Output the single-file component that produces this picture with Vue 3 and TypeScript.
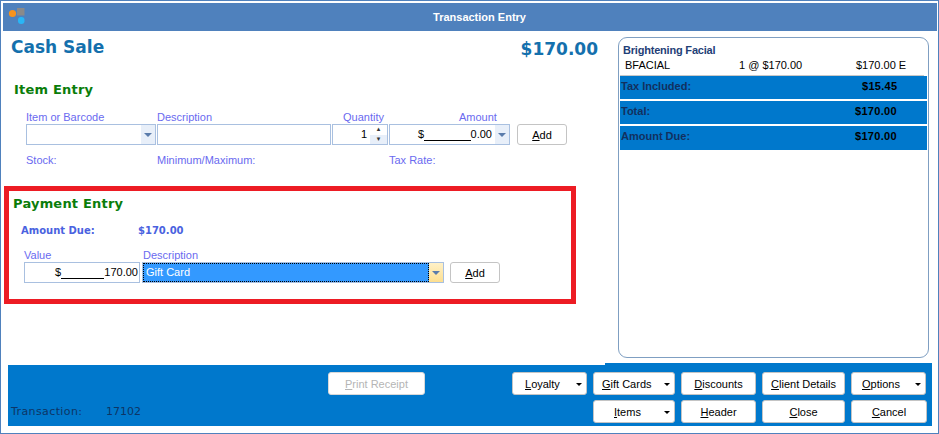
<script setup lang="ts">
interface Btn { label: string; key: string; menu?: boolean; cls: string }
const row1: Btn[] = [
  { label: 'oyalty', key: 'L', menu: true, cls: 'c-loyalty' },
  { label: 'ift Cards', key: 'G', menu: true, cls: 'c-gift' },
  { label: 'iscounts', key: 'D', cls: 'c-disc' },
  { label: 'lient Details', key: 'C', cls: 'c-client' },
  { label: 'ptions', key: 'O', menu: true, cls: 'c-opt' },
]
const row2: Btn[] = [
  { label: 'tems', key: 'I', menu: true, cls: 'c-gift' },
  { label: 'eader', key: 'H', cls: 'c-disc' },
  { label: 'lose', key: 'C', cls: 'c-client' },
  { label: 'ancel', key: 'C', cls: 'c-cancel' },
]
const totals = [
  { label: 'Tax Included:', value: '$15.45', cls: 'v-tax' },
  { label: 'Total:', value: '$170.00', cls: '' },
  { label: 'Amount Due:', value: '$170.00', cls: 'v-last' },
]
</script>

<template>
  <div class="window">
    <header class="title">
      <svg class="logo" width="18" height="18" viewBox="0 0 18 18">
        <rect x="9" y="0" width="7.5" height="7.5" fill="#8a8a8a" />
        <circle cx="4.5" cy="5.5" r="3.6" fill="#f7931e" />
        <rect x="10" y="9" width="6.5" height="7" rx="3" fill="#29b6f6" />
      </svg>
      <span class="title-text">Transaction Entry</span>
    </header>

    <div class="main">
      <section class="left">
        <div class="head">
          <h1>Cash Sale</h1>
          <strong class="grand">$170.00</strong>
        </div>

        <h2 class="item-h">Item Entry</h2>
        <div class="item-grid">
          <label>Item or Barcode</label>
          <label>Description</label>
          <label class="qty-label">Quantity</label>
          <label class="amt-label">Amount</label>
          <span></span>

          <div class="field combo"><span class="fill"></span><span class="arrow"><i></i></span></div>
          <div class="field"></div>
          <div class="field qty">
            <span class="fill num">1</span>
            <span class="spin"><b>▴</b><b>▾</b></span>
          </div>
          <div class="field combo">
            <span class="mask"><span>$</span><span class="line"></span><span>0.00</span></span>
            <span class="arrow"><i></i></span>
          </div>
          <button class="btn add"><u>A</u>dd</button>

          <span class="info">Stock:</span>
          <span class="info">Minimum/Maximum:</span>
          <span></span>
          <span class="info">Tax Rate:</span>
        </div>

        <div class="pay">
          <h2>Payment Entry</h2>
          <div class="due"><b>Amount Due:</b><b>$170.00</b></div>
          <div class="pay-grid">
            <label>Value</label>
            <label class="desc-label">Description</label>
            <span></span>
            <div class="field combo">
              <span class="mask"><span>$</span><span class="line"></span><span>170.00</span></span>
            </div>
            <div class="field combo sel">
              <span class="sel-text">Gift Card</span>
              <span class="arrow hot"><i></i></span>
            </div>
            <button class="btn add"><u>A</u>dd</button>
          </div>
        </div>
      </section>

      <aside class="receipt">
        <div class="r-name">Brightening Facial</div>
        <div class="r-line"><span>BFACIAL</span><span>1 @ $170.00</span><span>$170.00 E</span></div>
        <div v-for="t in totals" :key="t.label" class="r-total">
          <span>{{ t.label }}</span><span :class="t.cls">{{ t.value }}</span>
        </div>
      </aside>
    </div>

    <footer class="foot">
      <span class="trans"><span>Transaction:</span><span>17102</span></span>
      <button class="btn print"><u>P</u>rint Receipt</button>
      <button v-for="b in row1" :key="b.label" class="btn" :class="[b.cls, 'r1', { menu: b.menu }]">
        <span><u>{{ b.key }}</u>{{ b.label }}</span><i v-if="b.menu" class="caret"></i>
      </button>
      <button v-for="b in row2" :key="b.label" class="btn" :class="[b.cls, 'r2', { menu: b.menu }]">
        <span><u>{{ b.key }}</u>{{ b.label }}</span><i v-if="b.menu" class="caret"></i>
      </button>
    </footer>
  </div>
</template>

<style>
html, body { margin: 0; background: #fff; overflow: hidden; }
</style>

<style scoped>
.window {
  width: 939px; height: 434px; box-sizing: border-box;
  border: 1px solid #4f81bd; padding: 2px 1px 7px 1px;
  display: flex; flex-direction: column; background: #fff;
  font: 11px/14px "Liberation Sans", Arial, sans-serif; color: #000;
  overflow: hidden;
}
.title {
  flex: none; height: 28px; margin-left: 1px; margin-right: 0; padding-left: 19px;
  background: #4f81bd; display: flex; align-items: center; justify-content: center;
  position: relative; color: #fff;
}
.logo { position: absolute; left: 5px; top: 5px; }
.title-text { font: bold 11px/14px "Liberation Sans", sans-serif; }

.main { flex: 1; display: flex; min-height: 0; }
.left { width: 600px; flex: none; box-sizing: border-box; padding-left: 2px; }
.head { display: flex; justify-content: space-between; align-items: flex-start; width: 594px; height: 49px; padding-top: 6px; }
h1 { margin: 0 0 0 7px; font: bold 17px/20px "DejaVu Sans", sans-serif; color: #1470ad; }
.grand { font: bold 17px/24px "DejaVu Sans", sans-serif; color: #1470ad; }
h2 { margin: 0; font: bold 13px/16px "DejaVu Sans", sans-serif; color: #0a7d0a; letter-spacing: .2px; }
.item-h { margin: -4px 0 0 10px; }

.item-grid {
  display: grid; margin: 13px 0 0 22px;
  grid-template-columns: 131px 175px 57px 122px 50px;
  grid-template-rows: 13px 21px 30px;
  width: 535px;
}
.item-grid label, .pay-grid label, .info { color: #6a6af0; white-space: nowrap; }
.item-grid label, .pay-grid label { line-height: 12px; }
.qty-label { padding-left: 11px; }
.amt-label { padding-left: 70px; }
.desc-label { padding-left: 1px; }
.item-grid .add { margin-left: 6px; width: 50px; }
.info { padding-top: 8px; }

.field {
  box-sizing: border-box; border: 1px solid #a9c0e0; height: 21px; background: #fff;
  display: flex; align-items: stretch; margin-right: 1px;
}
.fill { flex: 1; }
.num { text-align: right; padding-right: 3px; line-height: 19px; }
.arrow { width: 14px; flex: none; background: #e8eff9; display: flex; align-items: center; justify-content: center; }
.arrow i { width: 0; height: 0; border: 4px solid transparent; border-top: 4px solid #5b7cab; border-bottom: 0; }
.arrow.hot { background: linear-gradient(#fff1c8, #fddf90); }
.spin { width: 17px; flex: none; display: flex; flex-direction: column; background: linear-gradient(#fff 50%, #e8eff9 50%); }
.spin b { height: 9.5px; font: 7px/9px "DejaVu Sans", sans-serif; text-align: center; color: #333; }
.mask { flex: 1; display: flex; padding: 0 3px 0 28px; line-height: 19px; }
.mask .line { flex: 1; border-bottom: 1px solid #000; height: 15px; }

.btn {
  box-sizing: border-box; height: 23px; margin: 0; padding: 0; background: #fff;
  border: 1px solid #c4c4c4; border-radius: 3px; color: #000;
  font: 11px/14px "Liberation Sans", Arial, sans-serif; cursor: default;
  display: flex; align-items: center; justify-content: center; position: relative;
}
.add { height: 21px; }

.pay {
  box-sizing: border-box; border: 5px solid #ed1c24; width: 572px; height: 118px;
  margin: 11px 0 0 0; padding: 5px 0 0 4px;
}
.due { display: flex; margin: 12px 0 0 8px; color: #4a62e0; font: bold 10px/14px "DejaVu Sans", sans-serif; }
.due b:first-child { width: 117px; }
.pay-grid {
  display: grid; grid-template-columns: 118px 308px 50px; grid-template-rows: 13px 21px;
  margin: 11px 0 0 11px;
}
.pay-grid .field { margin-right: 2px; }
.pay-grid .field + .field { margin-right: 6px; }
.pay-grid .mask { padding-left: 30px; padding-right: 1px; }
.sel-text { flex: 1; background: #3399ff; color: #fff; outline: 1px dotted #000; outline-offset: -1px; padding-left: 3px; line-height: 19px; }

.receipt {
  flex: none; box-sizing: border-box; width: 311px; height: 321px;
  margin: 6px 0 0 16px; border: 1px solid #7f9fc2; border-radius: 9px; padding: 5px 1px 0 1px;
}
.r-name { font: bold 11px/14px "Liberation Sans", sans-serif; color: #1f3f77; padding-left: 3px; letter-spacing: -.2px; }
.r-line {
  display: grid; grid-template-columns: 114px 117px 60px; padding: 1px 0 2px 5px; margin-right: 3px;
  line-height: 15px; border-bottom: 1px solid #c8c8c8; white-space: nowrap;
}
.r-total {
  display: grid; grid-template-columns: 234px 70px; height: 23px; background: #0078cc; margin-bottom: 2px;
  font-weight: bold; line-height: 21px; padding-left: 1px; color: #12305f; white-space: nowrap;
}
.r-total:last-child { height: 24px; }
.r-total span:last-child { color: #000; letter-spacing: .3px; }
.v-tax { padding-left: 7px; }

.foot {
  flex: none; margin: 0 5px 0 6px; height: 63px; background: #0078cc; position: relative;
  display: grid;
  grid-template-columns: 320px 97px 87px 75px 6px 82px 6px 75px 6px 83px 6px 75px;
  grid-template-rows: 23px 23px; row-gap: 5px; padding-top: 9px; box-sizing: border-box;
}
.foot::before { content: ""; position: absolute; left: 0; top: 0; width: 597px; height: 2px; background: #fff; }
.trans { grid-column: 1; grid-row: 2; padding: 5px 0 0 3px; display: flex; gap: 18px; color: #0d3565; font: 11px/14px "DejaVu Sans", sans-serif; }
.trans span:first-child { width: 77px; letter-spacing: .4px; }
.print { grid-column: 2; grid-row: 1; color: #b5b5b5; border-color: #d8d8d8; }
.r1 { grid-row: 1; } .r2 { grid-row: 2; }
.c-loyalty { grid-column: 4; }
.c-gift { grid-column: 6; }
.c-disc { grid-column: 8; }
.c-client { grid-column: 10; }
.c-opt, .c-cancel { grid-column: 12; }
.c-cancel { width: 76px; }
.menu { justify-content: flex-start; padding-left: 12px; }
.caret { position: absolute; right: 4px; top: 10px; width: 0; height: 0; border: 3px solid transparent; border-top: 3px solid #000; border-bottom: 0; }
.c-gift.r1 { padding-left: 8px; }
.c-gift.r2 { padding-left: 20px; }
.c-opt { padding-left: 10px; }
</style>
